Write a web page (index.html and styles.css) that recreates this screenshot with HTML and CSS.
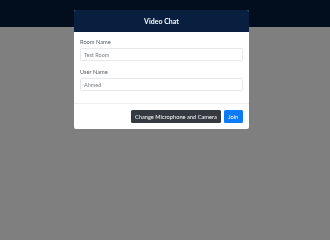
FILE: index.html
```html
<!DOCTYPE html>
<html lang="en">
<head>
<meta charset="utf-8">
<title>Video Chat</title>
<link rel="stylesheet" href="styles.css">
</head>
<body>
  <nav class="navbar"></nav>
  <main class="page"></main>
  <div class="backdrop"></div>
  <div class="modal">
    <div class="modal-header">
      <h5 class="modal-title">Video Chat</h5>
    </div>
    <div class="modal-body">
      <div class="form-group">
        <label class="label">Room Name</label>
        <div class="input">Test Room</div>
      </div>
      <div class="form-group">
        <label class="label">User Name</label>
        <div class="input">Ahmed</div>
      </div>
    </div>
    <div class="modal-footer">
      <button class="btn btn-dark">Change Microphone and Camera</button>
      <button class="btn btn-primary">Join</button>
    </div>
  </div>
</body>
</html>
```
FILE: styles.css
```css
* { box-sizing: border-box; }
html, body { margin: 0; padding: 0; }
body {
  width: 330px;
  height: 220px;
  background: #ffffff;
  font-family: Lato, "Open Sans", sans-serif;
  overflow: hidden;
}
.navbar {
  height: 27px;
  background: #041d3b;
}
.page { height: 193px; }
.backdrop {
  position: fixed;
  inset: 0;
  background: rgba(0, 0, 0, 0.5);
}
.modal {
  position: fixed;
  top: 10px;
  left: 74px;
  width: 175px;
  background: #ffffff;
  border-radius: 2px;
  overflow: hidden;
}
.modal-header {
  height: 22px;
  background: #081f3f;
  display: flex;
  align-items: center;
  justify-content: center;
}
.modal-title {
  margin: 0;
  color: #ffffff;
  font-size: 7px;
  font-weight: 700;
  line-height: 1;
}
.modal-body {
  padding: 6px 6px 6px 6px;
}
.form-group {
  display: flex;
  flex-direction: column;
  margin-bottom: 6.5px;
}
.label {
  font-size: 5.7px;
  line-height: 8px;
  color: #555a60;
  margin-bottom: 2px;
}
.input {
  height: 13px;
  border: 0.5px solid #e6e8ea;
  border-radius: 1.5px;
  padding: 0 3px;
  font-size: 5.5px;
  line-height: 12px;
  color: #7a7f85;
}
.modal-footer {
  border-top: 1px solid #eceef0;
  padding: 6px 6.5px 5.5px 6px;
  display: flex;
  justify-content: flex-end;
  gap: 3px;
}
.btn {
  height: 13px;
  border: none;
  border-radius: 1.5px;
  padding: 0 4.2px;
  font-family: Lato, "Open Sans", sans-serif;
  font-size: 5.7px;
  line-height: 13px;
  color: #ffffff;
}
.btn-dark { background: #343a40; }
.btn-primary { background: #0d7bf5; }
```
